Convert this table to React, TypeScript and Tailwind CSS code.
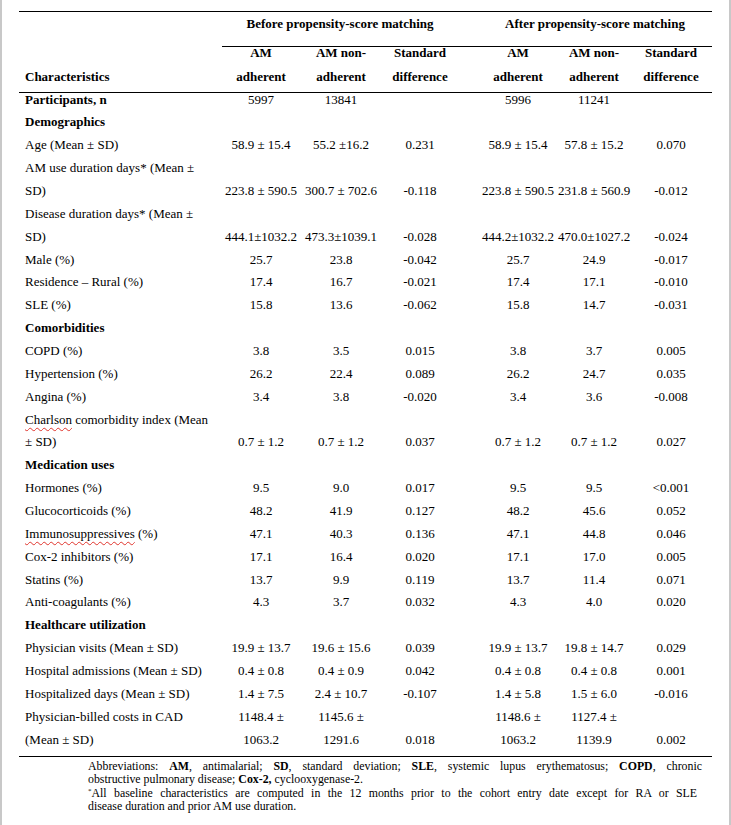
import React from "react";

type Row =
  | { section: string }
  | { label: string[]; bold?: boolean; squiggle?: boolean; vals: (string | string[])[] };

const COLS = "grid grid-cols-[203px_78px_82px_76px_20px_80px_72px_82px]";

const rows: Row[] = [
  { label: ["Participants, n"], bold: true, vals: ["5997", "13841", "", "5996", "11241", ""] },
  { section: "Demographics" },
  { label: ["Age (Mean ± SD)"], vals: ["58.9 ± 15.4", "55.2 ±16.2", "0.231", "58.9 ± 15.4", "57.8 ± 15.2", "0.070"] },
  { label: ["AM use duration days* (Mean ±", "SD)"], vals: ["223.8 ± 590.5", "300.7 ± 702.6", "-0.118", "223.8 ± 590.5", "231.8 ± 560.9", "-0.012"] },
  { label: ["Disease duration days* (Mean ±", "SD)"], vals: ["444.1±1032.2", "473.3±1039.1", "-0.028", "444.2±1032.2", "470.0±1027.2", "-0.024"] },
  { label: ["Male (%)"], vals: ["25.7", "23.8", "-0.042", "25.7", "24.9", "-0.017"] },
  { label: ["Residence – Rural (%)"], vals: ["17.4", "16.7", "-0.021", "17.4", "17.1", "-0.010"] },
  { label: ["SLE (%)"], vals: ["15.8", "13.6", "-0.062", "15.8", "14.7", "-0.031"] },
  { section: "Comorbidities" },
  { label: ["COPD (%)"], vals: ["3.8", "3.5", "0.015", "3.8", "3.7", "0.005"] },
  { label: ["Hypertension (%)"], vals: ["26.2", "22.4", "0.089", "26.2", "24.7", "0.035"] },
  { label: ["Angina (%)"], vals: ["3.4", "3.8", "-0.020", "3.4", "3.6", "-0.008"] },
  { label: ["Charlson comorbidity index (Mean", "± SD)"], squiggle: true, vals: ["0.7 ± 1.2", "0.7 ± 1.2", "0.037", "0.7 ± 1.2", "0.7 ± 1.2", "0.027"] },
  { section: "Medication uses" },
  { label: ["Hormones (%)"], vals: ["9.5", "9.0", "0.017", "9.5", "9.5", "<0.001"] },
  { label: ["Glucocorticoids (%)"], vals: ["48.2", "41.9", "0.127", "48.2", "45.6", "0.052"] },
  { label: ["Immunosuppressives (%)"], squiggle: true, vals: ["47.1", "40.3", "0.136", "47.1", "44.8", "0.046"] },
  { label: ["Cox-2 inhibitors (%)"], vals: ["17.1", "16.4", "0.020", "17.1", "17.0", "0.005"] },
  { label: ["Statins (%)"], vals: ["13.7", "9.9", "0.119", "13.7", "11.4", "0.071"] },
  { label: ["Anti-coagulants (%)"], vals: ["4.3", "3.7", "0.032", "4.3", "4.0", "0.020"] },
  { section: "Healthcare utilization" },
  { label: ["Physician visits (Mean ± SD)"], vals: ["19.9 ± 13.7", "19.6 ± 15.6", "0.039", "19.9 ± 13.7", "19.8 ± 14.7", "0.029"] },
  { label: ["Hospital admissions (Mean ± SD)"], vals: ["0.4 ± 0.8", "0.4 ± 0.9", "0.042", "0.4 ± 0.8", "0.4 ± 0.8", "0.001"] },
  { label: ["Hospitalized days (Mean ± SD)"], vals: ["1.4 ± 7.5", "2.4 ± 10.7", "-0.107", "1.4 ± 5.8", "1.5 ± 6.0", "-0.016"] },
  {
    label: ["Physician-billed costs in CAD", "(Mean ± SD)"],
    vals: [["1148.4 ±", "1063.2"], ["1145.6 ±", "1291.6"], "0.018", ["1148.6 ±", "1063.2"], ["1127.4 ±", "1139.9"], "0.002"],
  },
];

const squig = "underline decoration-wavy decoration-[#e0342c] decoration-1 underline-offset-[3px]";

function Label({ row }: { row: Extract<Row, { label: string[] }> }) {
  return (
    <div className={`pl-[6px] whitespace-nowrap ${row.bold ? "font-bold" : ""}`}>
      {row.label.map((l, i) => {
        if (i === 0 && row.squiggle) {
          const [first, ...rest] = l.split(" ");
          return (
            <div key={i}>
              <span className={squig}>{first}</span> {rest.join(" ")}
            </div>
          );
        }
        return <div key={i}>{l}</div>;
      })}
    </div>
  );
}

function Cell({ v }: { v: string | string[] }) {
  const lines = Array.isArray(v) ? v : [v];
  return (
    <div className="flex flex-col justify-end text-center whitespace-nowrap">
      {lines.map((l, i) => (
        <div key={i}>{l || "\u00a0"}</div>
      ))}
    </div>
  );
}

export default function App() {
  return (
    <div className="flex min-h-[825px] w-[731px] bg-white text-black [font-family:'Liberation_Serif','Times_New_Roman',serif]">
      <div className="w-[2px] shrink-0 bg-[#c8c8c8]" />
      <div className="flex-1">
        <div className="ml-[17px] w-[693px] pt-[11px] text-[13px]">
          <div className="h-px bg-black" />
          <div className={`${COLS} h-[34px] font-bold leading-[23px]`}>
            <div />
            <div className="col-span-3 text-center whitespace-nowrap">Before propensity-score matching</div>
            <div />
            <div className="col-span-3 text-center whitespace-nowrap">After propensity-score matching</div>
          </div>
          <div className="ml-[203px] h-px bg-black" />
          <div className={`${COLS} -mt-[6px] pb-[3px] font-bold leading-[24px] items-end`}>
            <div className="pl-[6px]">Characteristics</div>
            <Cell v={["AM", "adherent"]} />
            <Cell v={["AM non-", "adherent"]} />
            <Cell v={["Standard", "difference"]} />
            <div />
            <Cell v={["AM", "adherent"]} />
            <Cell v={["AM non-", "adherent"]} />
            <Cell v={["Standard", "difference"]} />
          </div>
          <div className="h-px bg-black" />
          <div className="-mt-[4.5px] pb-[4.5px] leading-[22.86px]">
            {rows.map((r, i) =>
              "section" in r ? (
                <div key={i} className="pl-[6px] font-bold">
                  {r.section}
                </div>
              ) : (
                <div key={i} className={`${COLS} items-stretch`}>
                  <Label row={r} />
                  <Cell v={r.vals[0]} />
                  <Cell v={r.vals[1]} />
                  <Cell v={r.vals[2]} />
                  <div />
                  <Cell v={r.vals[3]} />
                  <Cell v={r.vals[4]} />
                  <Cell v={r.vals[5]} />
                </div>
              )
            )}
          </div>
          <div className="h-px bg-black" />
          <div className="ml-[69px] w-[614px] pt-[3px] text-[11.85px] leading-[13.3px] whitespace-nowrap">
            <div className="text-justify [text-align-last:justify]">
              Abbreviations: <b>AM</b>, antimalarial; <b>SD</b>, standard deviation; <b>SLE</b>, systemic lupus erythematosus; <b>COPD</b>, chronic
            </div>
            <div>
              obstructive pulmonary disease; <b>Cox-2,</b> cyclooxygenase-2.
            </div>
            <div className="text-justify [text-align-last:justify] pr-[5px]">
              <span className="text-[7px] leading-none align-[4px]">*</span>All baseline characteristics are computed in the 12 months prior to the cohort entry date except for RA or SLE
            </div>
            <div>disease duration and prior AM use duration.</div>
          </div>
        </div>
      </div>
      <div className="w-[2px] shrink-0 bg-[#c8c8c8]" />
    </div>
  );
}
